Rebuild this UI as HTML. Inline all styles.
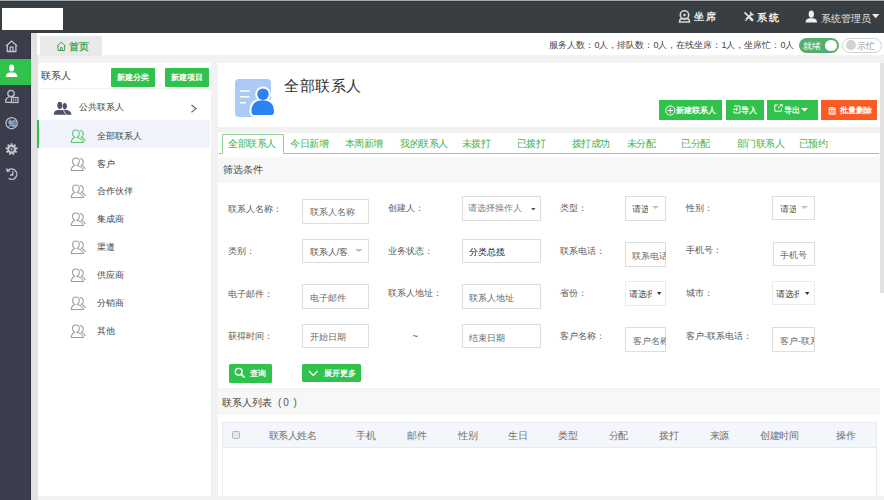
<!DOCTYPE html>
<html><head><meta charset="utf-8">
<style>
*{box-sizing:border-box;margin:0;padding:0}
html,body{width:884px;height:500px;overflow:hidden;background:#e9e9e9;font-family:"Liberation Sans",sans-serif;color:#333;position:relative}
.a{position:absolute;display:block}
.t{position:absolute;white-space:nowrap;line-height:1}
</style></head><body>
<div class="a" style="left:0px;top:0px;width:884px;height:500px;background:#f2f2f2"></div>
<div class="a" style="left:0px;top:0px;width:884px;height:32.7px;background:#393e42"></div>
<div class="a" style="left:0px;top:0px;width:884px;height:1px;background:#a8acaf"></div>
<div class="a" style="left:0px;top:1px;width:884px;height:1px;background:#30353a"></div>
<div class="a" style="left:2px;top:7.5px;width:61px;height:22.5px;background:#fff"></div>
<div class="a" style="left:31px;top:32.7px;width:6.6px;height:467.3px;background:#e2e2e2"></div>
<div class="a" style="left:0px;top:32.7px;width:31px;height:467.3px;background:#3b3d4c"></div>
<div class="a" style="left:30px;top:32.7px;width:1px;height:467.3px;background:#30323f"></div>
<div class="a" style="left:0px;top:58.6px;width:31px;height:26.2px;background:#31c24b"></div>
<svg class="a" style="left:678px;top:9px;" width="14" height="14" viewBox="0 0 14 14"><circle cx="6.5" cy="6" r="4.2" fill="none" stroke="#d6d6d6" stroke-width="1.6"/><circle cx="6.5" cy="6" r="1.3" fill="#d6d6d6"/><path d="M1.5 13 Q1.5 9.5 4.5 9.5 L8.5 9.5 Q11.5 9.5 11.5 13 Z" fill="none" stroke="#d6d6d6" stroke-width="1.5"/></svg>
<div class="t" style="left:693.8px;top:12.2px;font-size:10px;color:#eeeeee;font-weight:bold">坐</div>
<div class="t" style="left:706px;top:12.2px;font-size:10px;color:#eeeeee;font-weight:bold">席</div>
<svg class="a" style="left:742.5px;top:11px;" width="12" height="11" viewBox="0 0 12 11"><g stroke="#e0e0e0" stroke-linecap="round" fill="none"><path d="M2 1.8 L5 4.8" stroke-width="1.7"/><path d="M6.3 6.1 L9.2 9" stroke-width="2.6"/><path d="M8.6 3 L2.6 9" stroke-width="1.9"/><path d="M7.6 1.2 L8.4 3.2 L10.2 3.8" stroke-width="1.4"/></g><circle cx="2.3" cy="8.8" r="0.7" fill="#393e42"/></svg>
<div class="t" style="left:757px;top:12.8px;font-size:10px;color:#eeeeee;font-weight:bold">系</div>
<div class="t" style="left:768.8px;top:12.8px;font-size:10px;color:#eeeeee;font-weight:bold">统</div>
<svg class="a" style="left:805px;top:9.5px;" width="13" height="13" viewBox="0 0 13 13"><ellipse cx="6.3" cy="4.2" rx="2.6" ry="3.6" fill="#f0f0f0"/><path d="M0.5 12.6 Q0.8 8.6 4.2 8.2 L8.4 8.2 Q11.8 8.6 12.1 12.6 Z" fill="#f0f0f0"/></svg>
<div class="t" style="left:820.9px;top:13.5px;font-size:10px;color:#e6e6e6;">系统管理员</div>
<svg class="a" style="left:871.5px;top:14px;" width="8" height="5" viewBox="0 0 8 5"><path d="M0 0 L7.4 0 L3.7 4.3 Z" fill="#eee"/></svg>
<svg class="a" style="left:5px;top:40px;" width="14" height="13" viewBox="0 0 14 13"><path d="M1 6 L6.6 1 L12.2 6" fill="none" stroke="#c4c5cb" stroke-width="1.3"/><path d="M2.3 5.2 L2.3 11.5 L10.9 11.5 L10.9 5.2" fill="none" stroke="#c4c5cb" stroke-width="1.3"/><path d="M5.2 11.5 L5.2 7.2 L8 7.2 L8 11.5" fill="none" stroke="#c4c5cb" stroke-width="1.2"/></svg>
<svg class="a" style="left:5px;top:64px;" width="14" height="14" viewBox="0 0 14 14"><ellipse cx="6.6" cy="4" rx="2.6" ry="3.5" fill="#fff"/><path d="M0.8 13 Q0.9 9.3 4.2 8.6 L9 8.6 Q12.3 9.3 12.5 13 Z" fill="#fff"/></svg>
<svg class="a" style="left:4px;top:89px;" width="16" height="15" viewBox="0 0 16 15"><circle cx="7" cy="4.5" r="3.2" fill="none" stroke="#c4c5cb" stroke-width="1.3"/><path d="M5 8 Q1.5 9.5 1.5 12.2 Q1.5 13.4 3 13.4 L7 13.4" fill="none" stroke="#c4c5cb" stroke-width="1.3"/><rect x="7.5" y="8.5" width="6.5" height="5" fill="none" stroke="#c4c5cb" stroke-width="1.2"/><path d="M9.6 9.6 V12.4 M11.8 9.6 V12.4" stroke="#c4c5cb" stroke-width="0.9"/></svg>
<svg class="a" style="left:5px;top:116px;" width="14" height="14" viewBox="0 0 14 14"><circle cx="6.6" cy="7.2" r="5.6" fill="none" stroke="#c4c5cb" stroke-width="1.2"/></svg>
<div class="t" style="left:7.6px;top:120.2px;font-size:8px;color:#c4c5cb;font-weight:bold">知</div>
<svg class="a" style="left:5px;top:142px;" width="14" height="14" viewBox="0 0 14 14"><path d="M5.55 2.93 L5.74 1.26 L7.46 1.26 L7.65 2.93 L8.55 3.25 L9.76 2.10 L11.08 3.20 L10.15 4.60 L10.63 5.43 L12.30 5.32 L12.60 7.02 L10.99 7.49 L10.82 8.43 L12.17 9.42 L11.31 10.91 L9.78 10.24 L9.04 10.86 L9.44 12.49 L7.82 13.07 L7.08 11.57 L6.12 11.57 L5.38 13.07 L3.76 12.49 L4.16 10.86 L3.42 10.24 L1.89 10.91 L1.03 9.42 L2.38 8.43 L2.21 7.49 L0.60 7.02 L0.90 5.32 L2.57 5.43 L3.05 4.60 L2.12 3.20 L3.44 2.10 L4.65 3.25 Z" fill="#c4c5cb"/><circle cx="6.6" cy="7.2" r="2.3" fill="#3b3d4c"/><circle cx="6.6" cy="7.2" r="1" fill="#c4c5cb"/></svg>
<svg class="a" style="left:4px;top:166px;" width="16" height="16" viewBox="0 0 16 16"><path d="M4.2 4.2 A5.2 5.2 0 1 1 4.6 12.4" fill="none" stroke="#c4c5cb" stroke-width="1.3"/><path d="M2.2 1.8 L2.6 6 L6.6 5.6 Z" fill="#c4c5cb"/><path d="M8.8 5.2 V9 H6" fill="none" stroke="#c4c5cb" stroke-width="1.3"/></svg>
<div class="a" style="left:37px;top:33px;width:847px;height:22px;background:#fff"></div>
<div class="a" style="left:40px;top:36px;width:62px;height:20px;background:#e9e9e9"></div>
<svg class="a" style="left:56px;top:41px;" width="11" height="11" viewBox="0 0 11 11"><path d="M1 5 L5.3 1.2 L9.6 5 M2 4.4 V9.5 H8.6 V4.4 M4.4 9.5 V6.6 H6.2 V9.5" fill="none" stroke="#4a9d5b" stroke-width="1"/></svg>
<div class="t" style="left:69px;top:41.5px;font-size:10px;color:#45a85b;font-weight:bold">首页</div>
<div class="t" style="left:549.4px;top:40.9px;font-size:9px;color:#444;">服务人数：0人，排队数：0人，在线坐席：1人，坐席忙：0人</div>
<div class="a" style="left:799px;top:38px;width:40px;height:14.5px;border-radius:7.5px;background:#54ae6c"></div>
<div class="t" style="left:803px;top:41.7px;font-size:9px;color:#fff;">就绪</div>
<div class="a" style="left:825px;top:39.5px;width:11.5px;height:11.5px;border-radius:50%;background:#fff"></div>
<div class="a" style="left:842.4px;top:38px;width:39.5px;height:14.5px;border-radius:7.5px;background:#fff;border:1px solid #d2d2d2"></div>
<div class="a" style="left:846px;top:40.2px;width:10px;height:10px;border-radius:50%;background:#d2d2d2"></div>
<div class="t" style="left:857px;top:42.0px;font-size:9px;color:#999;">示忙</div>
<div class="a" style="left:37.6px;top:62.6px;width:173.6px;height:433.8px;background:#fff"></div>
<div class="t" style="left:40.8px;top:71.2px;font-size:10px;color:#3a3a3a;">联系人</div>
<div class="a" style="left:111px;top:67.5px;width:43.5px;height:19px;background:#31c24b;border-radius:1px"></div>
<div class="t" style="left:117px;top:74.0px;font-size:8px;color:#fff;font-weight:bold">新建分类</div>
<div class="a" style="left:164.5px;top:67.5px;width:44px;height:19px;background:#31c24b;border-radius:1px"></div>
<div class="t" style="left:170.5px;top:74.0px;font-size:8px;color:#fff;font-weight:bold">新建项目</div>
<div class="a" style="left:37px;top:88px;width:174px;height:1px;background:#f0f0f0"></div>
<svg class="a" style="left:53px;top:101px;" width="19" height="14" viewBox="0 0 19 14"><g fill="#505268"><ellipse cx="11.8" cy="5.2" rx="2.1" ry="3.1"/><path d="M9.8 9 L14 9 Q18.4 10 18.5 13.8 L11 13.8 Z"/><ellipse cx="6.8" cy="4.3" rx="2.5" ry="3.6"/><path d="M0.6 13.8 Q0.8 9.8 4.5 9 L9.2 9 Q12.8 9.8 13 13.8 Z"/></g><path d="M10.5 9.4 L13 13.8" stroke="#fff" stroke-width="0.8"/></svg>
<div class="t" style="left:78.6px;top:102.9px;font-size:9px;color:#444;">公共联系人</div>
<svg class="a" style="left:189.5px;top:104px;" width="8" height="10" viewBox="0 0 8 10"><path d="M1.5 1 L6 4.6 L1.5 8.2" fill="none" stroke="#666" stroke-width="1.2"/></svg>
<div class="a" style="left:39px;top:120.2px;width:170.5px;height:28px;background:#f0f3fb"></div>
<div class="a" style="left:37px;top:120.2px;width:2px;height:28px;background:#31c24b"></div>
<svg class="a" style="left:67.5px;top:127.70000000000002px;" width="19" height="16" viewBox="0 0 19 16"><g fill="none" stroke="#5cc46a" stroke-width="1.05"><path d="M6.6 9.4 C5.2 8.6 4.5 7 4.5 5.3 C4.5 3.3 6 2 7.9 2 C9.8 2 11.3 3.3 11.3 5.3 C11.3 7 10.6 8.6 9.2 9.4 C12.5 10.3 15 11.8 15.3 14.4 L3.3 14.4 C3.4 12 4.5 10.2 6.6 9.4 Z"/><path d="M11.8 2.6 C14 2.8 15.3 4.5 15.3 6.3 C15.3 7.6 14.6 8.6 13.5 9.2 C15.6 10 16.9 11.3 17.4 13.2"/></g></svg>
<div class="t" style="left:96.7px;top:131.8px;font-size:9px;color:#444;">全部联系人</div>
<svg class="a" style="left:67.5px;top:155.53px;" width="19" height="16" viewBox="0 0 19 16"><g fill="none" stroke="#9a9a9a" stroke-width="1.05"><path d="M6.6 9.4 C5.2 8.6 4.5 7 4.5 5.3 C4.5 3.3 6 2 7.9 2 C9.8 2 11.3 3.3 11.3 5.3 C11.3 7 10.6 8.6 9.2 9.4 C12.5 10.3 15 11.8 15.3 14.4 L3.3 14.4 C3.4 12 4.5 10.2 6.6 9.4 Z"/><path d="M11.8 2.6 C14 2.8 15.3 4.5 15.3 6.3 C15.3 7.6 14.6 8.6 13.5 9.2 C15.6 10 16.9 11.3 17.4 13.2"/></g></svg>
<div class="t" style="left:96.7px;top:159.63px;font-size:9px;color:#444;">客户</div>
<svg class="a" style="left:67.5px;top:183.36px;" width="19" height="16" viewBox="0 0 19 16"><g fill="none" stroke="#9a9a9a" stroke-width="1.05"><path d="M6.6 9.4 C5.2 8.6 4.5 7 4.5 5.3 C4.5 3.3 6 2 7.9 2 C9.8 2 11.3 3.3 11.3 5.3 C11.3 7 10.6 8.6 9.2 9.4 C12.5 10.3 15 11.8 15.3 14.4 L3.3 14.4 C3.4 12 4.5 10.2 6.6 9.4 Z"/><path d="M11.8 2.6 C14 2.8 15.3 4.5 15.3 6.3 C15.3 7.6 14.6 8.6 13.5 9.2 C15.6 10 16.9 11.3 17.4 13.2"/></g></svg>
<div class="t" style="left:96.7px;top:187.46px;font-size:9px;color:#444;">合作伙伴</div>
<svg class="a" style="left:67.5px;top:211.19000000000003px;" width="19" height="16" viewBox="0 0 19 16"><g fill="none" stroke="#9a9a9a" stroke-width="1.05"><path d="M6.6 9.4 C5.2 8.6 4.5 7 4.5 5.3 C4.5 3.3 6 2 7.9 2 C9.8 2 11.3 3.3 11.3 5.3 C11.3 7 10.6 8.6 9.2 9.4 C12.5 10.3 15 11.8 15.3 14.4 L3.3 14.4 C3.4 12 4.5 10.2 6.6 9.4 Z"/><path d="M11.8 2.6 C14 2.8 15.3 4.5 15.3 6.3 C15.3 7.6 14.6 8.6 13.5 9.2 C15.6 10 16.9 11.3 17.4 13.2"/></g></svg>
<div class="t" style="left:96.7px;top:215.29px;font-size:9px;color:#444;">集成商</div>
<svg class="a" style="left:67.5px;top:239.02px;" width="19" height="16" viewBox="0 0 19 16"><g fill="none" stroke="#9a9a9a" stroke-width="1.05"><path d="M6.6 9.4 C5.2 8.6 4.5 7 4.5 5.3 C4.5 3.3 6 2 7.9 2 C9.8 2 11.3 3.3 11.3 5.3 C11.3 7 10.6 8.6 9.2 9.4 C12.5 10.3 15 11.8 15.3 14.4 L3.3 14.4 C3.4 12 4.5 10.2 6.6 9.4 Z"/><path d="M11.8 2.6 C14 2.8 15.3 4.5 15.3 6.3 C15.3 7.6 14.6 8.6 13.5 9.2 C15.6 10 16.9 11.3 17.4 13.2"/></g></svg>
<div class="t" style="left:96.7px;top:243.12px;font-size:9px;color:#444;">渠道</div>
<svg class="a" style="left:67.5px;top:266.84999999999997px;" width="19" height="16" viewBox="0 0 19 16"><g fill="none" stroke="#9a9a9a" stroke-width="1.05"><path d="M6.6 9.4 C5.2 8.6 4.5 7 4.5 5.3 C4.5 3.3 6 2 7.9 2 C9.8 2 11.3 3.3 11.3 5.3 C11.3 7 10.6 8.6 9.2 9.4 C12.5 10.3 15 11.8 15.3 14.4 L3.3 14.4 C3.4 12 4.5 10.2 6.6 9.4 Z"/><path d="M11.8 2.6 C14 2.8 15.3 4.5 15.3 6.3 C15.3 7.6 14.6 8.6 13.5 9.2 C15.6 10 16.9 11.3 17.4 13.2"/></g></svg>
<div class="t" style="left:96.7px;top:270.95px;font-size:9px;color:#444;">供应商</div>
<svg class="a" style="left:67.5px;top:294.67999999999995px;" width="19" height="16" viewBox="0 0 19 16"><g fill="none" stroke="#9a9a9a" stroke-width="1.05"><path d="M6.6 9.4 C5.2 8.6 4.5 7 4.5 5.3 C4.5 3.3 6 2 7.9 2 C9.8 2 11.3 3.3 11.3 5.3 C11.3 7 10.6 8.6 9.2 9.4 C12.5 10.3 15 11.8 15.3 14.4 L3.3 14.4 C3.4 12 4.5 10.2 6.6 9.4 Z"/><path d="M11.8 2.6 C14 2.8 15.3 4.5 15.3 6.3 C15.3 7.6 14.6 8.6 13.5 9.2 C15.6 10 16.9 11.3 17.4 13.2"/></g></svg>
<div class="t" style="left:96.7px;top:298.78px;font-size:9px;color:#444;">分销商</div>
<svg class="a" style="left:67.5px;top:322.51px;" width="19" height="16" viewBox="0 0 19 16"><g fill="none" stroke="#9a9a9a" stroke-width="1.05"><path d="M6.6 9.4 C5.2 8.6 4.5 7 4.5 5.3 C4.5 3.3 6 2 7.9 2 C9.8 2 11.3 3.3 11.3 5.3 C11.3 7 10.6 8.6 9.2 9.4 C12.5 10.3 15 11.8 15.3 14.4 L3.3 14.4 C3.4 12 4.5 10.2 6.6 9.4 Z"/><path d="M11.8 2.6 C14 2.8 15.3 4.5 15.3 6.3 C15.3 7.6 14.6 8.6 13.5 9.2 C15.6 10 16.9 11.3 17.4 13.2"/></g></svg>
<div class="t" style="left:96.7px;top:326.61px;font-size:9px;color:#444;">其他</div>
<div class="a" style="left:218px;top:62.6px;width:662px;height:64px;background:#fff"></div>
<div class="a" style="left:880px;top:62.6px;width:4px;height:230px;background:#e2e2e2"></div>
<div class="a" style="left:880px;top:292.6px;width:4px;height:207.4px;background:#fff"></div>
<svg class="a" style="left:233px;top:77px;" width="46" height="44" viewBox="0 0 46 44"><rect x="2" y="2" width="36" height="38" rx="4" fill="#abcaf6"/><path d="M7 14 H16.8 M7 19.8 H16.8 M7 25.7 H13" stroke="#fff" stroke-width="1.5"/><g fill="#fff" stroke="#fff" stroke-width="4" stroke-linejoin="round"><circle cx="30" cy="17.2" r="5.8"/><path d="M18.5 33.5 Q18.8 23.5 29.75 23.3 Q40.7 23.5 41 33.5 L41 35 Q41 38 38 38 L21.5 38 Q18.5 38 18.5 35 Z"/></g><g fill="#2b82f3"><circle cx="30" cy="17.2" r="5.8"/><path d="M18.5 33.5 Q18.8 23.5 29.75 23.3 Q40.7 23.5 41 33.5 L41 35 Q41 38 38 38 L21.5 38 Q18.5 38 18.5 35 Z"/></g></svg>
<div class="t" style="left:284.2px;top:78.1px;font-size:15px;color:#2e2e2e;letter-spacing:0.5px">全部联系人</div>
<div class="a" style="left:659.2px;top:100.3px;width:63.3px;height:19.4px;background:#31c24b"></div>
<svg class="a" style="left:664.5px;top:104.7px;" width="11" height="11" viewBox="0 0 11 11"><circle cx="5.3" cy="5.5" r="4.6" fill="none" stroke="#fff" stroke-width="1"/><path d="M5.3 2.8 V8.2 M2.6 5.5 H8" stroke="#fff" stroke-width="1"/></svg>
<div class="t" style="left:676.4px;top:107.0px;font-size:8px;color:#fff;font-weight:bold">新建联系人</div>
<div class="a" style="left:726px;top:100.3px;width:37.6px;height:19.4px;background:#31c24b"></div>
<svg class="a" style="left:732.5px;top:104.5px;" width="8" height="9" viewBox="0 0 8 9"><path d="M1 1 H7 V8 H1 V6" fill="none" stroke="#fff" stroke-width="1"/><path d="M0 4.2 H4.6 M3 2.6 L4.7 4.2 L3 5.8" fill="none" stroke="#fff" stroke-width="1"/></svg>
<div class="t" style="left:741.2px;top:106.5px;font-size:8px;color:#fff;font-weight:bold">导入</div>
<div class="a" style="left:767.2px;top:100.3px;width:50.4px;height:19.4px;background:#31c24b"></div>
<svg class="a" style="left:774.4px;top:104.3px;" width="9" height="8" viewBox="0 0 9 8"><path d="M4 1 H0.8 V7.2 H7.4 V4" fill="none" stroke="#fff" stroke-width="1"/><path d="M4 4.2 L8 0.4 M5.6 0.4 H8.2 V3" fill="none" stroke="#fff" stroke-width="1"/></svg>
<div class="t" style="left:783.7px;top:106.5px;font-size:8px;color:#fff;font-weight:bold">导出</div>
<svg class="a" style="left:801px;top:108px;" width="8" height="4" viewBox="0 0 8 4"><path d="M0 0 H7 L3.5 3.6 Z" fill="#fff"/></svg>
<div class="a" style="left:820.9px;top:100.3px;width:55.8px;height:19.4px;background:#fb5a22"></div>
<svg class="a" style="left:828px;top:106.5px;" width="9" height="8" viewBox="0 0 9 8"><path d="M0.3 1 H7.9 M3 1 V0.2 H5.2 V1" fill="none" stroke="#fff" stroke-width="1"/><rect x="1.2" y="2.3" width="5.8" height="4.8" fill="none" stroke="#fff" stroke-width="1.1"/><path d="M3.2 3 V6.5 M5 3 V6.5" stroke="#fff" stroke-width="0.9"/></svg>
<div class="t" style="left:839.9px;top:107.0px;font-size:8px;color:#fff;font-weight:bold">批量删除</div>
<div class="a" style="left:218px;top:132.7px;width:662px;height:24.6px;background:#fff"></div>
<div class="a" style="left:218.6px;top:152.6px;width:660.4px;height:1px;background:#8fd199"></div>
<div class="a" style="left:222.2px;top:134px;width:61.5px;height:19.6px;background:#fff;border:1px solid #8fd199;border-bottom:none"></div>
<div class="t" style="left:228.4px;top:139.1px;font-size:10px;color:#3cb54c;letter-spacing:-0.5px">全部联系人</div>
<div class="t" style="left:290px;top:139.1px;font-size:10px;color:#3cb54c;letter-spacing:-0.5px">今日新增</div>
<div class="t" style="left:344.6px;top:139.1px;font-size:10px;color:#3cb54c;letter-spacing:-0.5px">本周新增</div>
<div class="t" style="left:400px;top:139.1px;font-size:10px;color:#3cb54c;letter-spacing:-0.5px">我的联系人</div>
<div class="t" style="left:461.7px;top:139.1px;font-size:10px;color:#3cb54c;letter-spacing:-0.5px">未拨打</div>
<div class="t" style="left:516.7px;top:139.1px;font-size:10px;color:#3cb54c;letter-spacing:-0.5px">已拨打</div>
<div class="t" style="left:571.9px;top:139.1px;font-size:10px;color:#3cb54c;letter-spacing:-0.5px">拨打成功</div>
<div class="t" style="left:626.5px;top:139.1px;font-size:10px;color:#3cb54c;letter-spacing:-0.5px">未分配</div>
<div class="t" style="left:681.3px;top:139.1px;font-size:10px;color:#3cb54c;letter-spacing:-0.5px">已分配</div>
<div class="t" style="left:736.8px;top:139.1px;font-size:10px;color:#3cb54c;letter-spacing:-0.5px">部门联系人</div>
<div class="t" style="left:798.5px;top:139.1px;font-size:10px;color:#3cb54c;letter-spacing:-0.5px">已预约</div>
<div class="a" style="left:218px;top:157.3px;width:662px;height:26px;background:#f7f7f7"></div>
<div class="t" style="left:222.7px;top:165.3px;font-size:10px;color:#4a4a4a;">筛选条件</div>
<div class="a" style="left:218px;top:183.3px;width:662px;height:205.1px;background:#fff"></div>
<div class="t" style="left:227.7px;top:204.5px;font-size:9px;color:#5a5a5a;">联系人名称：</div>
<div class="a" style="left:302.3px;top:199.2px;width:66.5px;height:24.4px;background:#fff;border:1px solid #dedede"></div>
<div class="t" style="left:309.8px;top:208.1px;font-size:9px;color:#686868;">联系人名称</div>
<div class="t" style="left:388.2px;top:204.0px;font-size:9px;color:#5a5a5a;">创建人：</div>
<div class="a" style="left:462.1px;top:196.2px;width:79px;height:24.4px;background:#fff;border:1px solid #dedede"></div>
<div class="t" style="left:468.3px;top:204.3px;font-size:9px;color:#808080;">请选择操作人</div>
<svg class="a" style="left:531.2px;top:207.6px;" width="5" height="3" viewBox="0 0 5 3"><path d="M0 0 H4.6 L2.3 2.6 Z" fill="#555"/></svg>
<div class="t" style="left:560px;top:204.0px;font-size:9px;color:#5a5a5a;">类型：</div>
<div class="a" style="left:625.2px;top:196.2px;width:41.3px;height:24.4px;background:#fff;border:1px solid #dedede"></div>
<div class="t" style="left:632px;top:205.1px;font-size:9px;color:#555;width:16px;overflow:hidden">请选择</div>
<svg class="a" style="left:652.4px;top:205.8px;" width="8" height="4" viewBox="0 0 8 4"><path d="M0 0 H7.2 L3.6 3 Z" fill="#c2c2c2"/></svg>
<div class="t" style="left:686.3px;top:204.0px;font-size:9px;color:#5a5a5a;">性别：</div>
<div class="a" style="left:772px;top:196.1px;width:42.6px;height:24.4px;background:#fff;border:1px solid #dedede"></div>
<div class="t" style="left:780.2px;top:205.1px;font-size:9px;color:#555;width:15.8px;overflow:hidden">请选择</div>
<svg class="a" style="left:801.2px;top:205.8px;" width="8" height="4" viewBox="0 0 8 4"><path d="M0 0 H7.2 L3.6 3 Z" fill="#c2c2c2"/></svg>
<div class="t" style="left:227.7px;top:246.8px;font-size:9px;color:#5a5a5a;">类别：</div>
<div class="a" style="left:302.3px;top:238.5px;width:66.5px;height:24.4px;background:#fff;border:1px solid #dedede"></div>
<div class="t" style="left:309.8px;top:247.5px;font-size:9px;color:#555;width:39.7px;overflow:hidden">联系人/客户</div>
<svg class="a" style="left:354.6px;top:249.3px;" width="8" height="4" viewBox="0 0 8 4"><path d="M0 0 H7.8 L3.9 3 Z" fill="#c2c2c2"/></svg>
<div class="t" style="left:388.2px;top:247.1px;font-size:9px;color:#5a5a5a;">业务状态：</div>
<div class="a" style="left:462.1px;top:238.5px;width:79px;height:24.9px;background:#fff;border:1px solid #dedede"></div>
<div class="t" style="left:469px;top:248.0px;font-size:9px;color:#111;">分类总揽</div>
<div class="t" style="left:560px;top:246.8px;font-size:9px;color:#5a5a5a;">联系电话：</div>
<div class="a" style="left:625.2px;top:241.7px;width:41.3px;height:24.9px;background:#fff;border:1px solid #dedede"></div>
<div class="t" style="left:632px;top:251.7px;font-size:9px;color:#686868;width:34px;overflow:hidden">联系电话</div>
<div class="t" style="left:686.3px;top:246.4px;font-size:9px;color:#5a5a5a;">手机号：</div>
<div class="a" style="left:772.5px;top:242.3px;width:42px;height:23.5px;background:#fff;border:1px solid #dedede"></div>
<div class="t" style="left:780px;top:251.3px;font-size:9px;color:#686868;width:34px;overflow:hidden">手机号</div>
<div class="t" style="left:228.4px;top:289.5px;font-size:9px;color:#5a5a5a;">电子邮件：</div>
<div class="a" style="left:302.3px;top:284.2px;width:66.5px;height:24.4px;background:#fff;border:1px solid #dedede"></div>
<div class="t" style="left:309.8px;top:293.9px;font-size:9px;color:#686868;">电子邮件</div>
<div class="t" style="left:388.2px;top:289.0px;font-size:9px;color:#5a5a5a;">联系人地址：</div>
<div class="a" style="left:462.1px;top:284.2px;width:79px;height:24.4px;background:#fff;border:1px solid #dedede"></div>
<div class="t" style="left:469px;top:293.9px;font-size:9px;color:#686868;">联系人地址</div>
<div class="t" style="left:560px;top:289.0px;font-size:9px;color:#5a5a5a;">省份：</div>
<div class="a" style="left:625.2px;top:281.2px;width:41.3px;height:24.4px;background:#fff;border:1px solid #ececec"></div>
<div class="t" style="left:629px;top:289.5px;font-size:9px;color:#444;width:22.5px;overflow:hidden">请选择</div>
<svg class="a" style="left:657px;top:292px;" width="5" height="4" viewBox="0 0 5 4"><path d="M0 0 H4.4 L2.2 3 Z" fill="#333"/></svg>
<div class="t" style="left:686.3px;top:289.0px;font-size:9px;color:#5a5a5a;">城市：</div>
<div class="a" style="left:772.4px;top:280.8px;width:42.2px;height:24.7px;background:#fff;border:1px solid #ececec"></div>
<div class="t" style="left:776.3px;top:289.5px;font-size:9px;color:#444;width:23.2px;overflow:hidden">请选择</div>
<svg class="a" style="left:805px;top:292px;" width="5" height="4" viewBox="0 0 5 4"><path d="M0 0 H4.4 L2.2 3 Z" fill="#333"/></svg>
<div class="t" style="left:228.4px;top:332.09999999999997px;font-size:9px;color:#5a5a5a;">获得时间：</div>
<div class="a" style="left:302.3px;top:324px;width:66.5px;height:24.4px;background:#fff;border:1px solid #dedede"></div>
<div class="t" style="left:309.8px;top:333.2px;font-size:9px;color:#686868;">开始日期</div>
<div class="t" style="left:412.2px;top:331.7px;font-size:10px;color:#666;">~</div>
<div class="a" style="left:462.1px;top:324px;width:79px;height:24.4px;background:#fff;border:1px solid #dedede"></div>
<div class="t" style="left:469px;top:333.5px;font-size:9px;color:#686868;">结束日期</div>
<div class="t" style="left:560px;top:332.09999999999997px;font-size:9px;color:#5a5a5a;">客户名称：</div>
<div class="a" style="left:625.2px;top:327.2px;width:41.3px;height:24.4px;background:#fff;border:1px solid #dedede"></div>
<div class="t" style="left:632.6px;top:336.5px;font-size:9px;color:#686868;width:33.4px;overflow:hidden">客户名称</div>
<div class="t" style="left:686.3px;top:331.9px;font-size:9px;color:#5a5a5a;">客户-联系电话：</div>
<div class="a" style="left:772.4px;top:327px;width:42.2px;height:24.5px;background:#fff;border:1px solid #dedede"></div>
<div class="t" style="left:780.3px;top:336.5px;font-size:9px;color:#686868;width:33.7px;overflow:hidden">客户-联系电话</div>
<div class="a" style="left:228.5px;top:363.7px;width:43.3px;height:18.9px;background:#31c24b;border-radius:1.5px"></div>
<svg class="a" style="left:234px;top:367px;" width="12" height="12" viewBox="0 0 12 12"><circle cx="4.7" cy="4.8" r="3.4" fill="none" stroke="#fff" stroke-width="1.4"/><path d="M7.2 7.3 L10 10" stroke="#fff" stroke-width="1.7" stroke-linecap="round"/></svg>
<div class="t" style="left:250.3px;top:369.7px;font-size:8px;color:#fff;font-weight:bold">查询</div>
<div class="a" style="left:302.3px;top:363.7px;width:58.4px;height:18.7px;background:#31c24b;border-radius:1.5px"></div>
<svg class="a" style="left:308px;top:369.5px;" width="11" height="7" viewBox="0 0 11 7"><path d="M1 1 L5.3 5.4 L9.6 1" fill="none" stroke="#fff" stroke-width="1.3"/></svg>
<div class="t" style="left:323.7px;top:370.4px;font-size:8px;color:#fff;font-weight:bold">展开更多</div>
<div class="a" style="left:218px;top:388.6px;width:662px;height:26.4px;background:#f7f7f7"></div>
<div class="t" style="left:222.2px;top:398.4px;font-size:10px;color:#444;">联系人列表</div>
<div class="t" style="left:278px;top:398.4px;font-size:10px;color:#555;">(</div>
<div class="t" style="left:283.3px;top:398.4px;font-size:10px;color:#555;">0</div>
<div class="t" style="left:293.6px;top:398.4px;font-size:10px;color:#555;">)</div>
<div class="a" style="left:218px;top:415px;width:662px;height:81.4px;background:#fff"></div>
<div class="a" style="left:222px;top:422.3px;width:655px;height:78px;border:1px solid #ebebeb;background:#fff"></div>
<div class="a" style="left:223px;top:423.3px;width:653px;height:24.4px;background:#f3f6fb;border-bottom:1px solid #eaeaea"></div>
<div class="a" style="left:231.9px;top:431px;width:8.2px;height:8.2px;border:1px solid #b5b5b5;border-radius:1.5px;background:#e6e6e6"></div>
<div class="t" style="left:268.7px;top:431.0px;font-size:10px;color:#707070;letter-spacing:-0.5px">联系人姓名</div>
<div class="t" style="left:356.3px;top:431.0px;font-size:10px;color:#707070;letter-spacing:-0.5px">手机</div>
<div class="t" style="left:407.4px;top:431.0px;font-size:10px;color:#707070;letter-spacing:-0.5px">邮件</div>
<div class="t" style="left:458px;top:431.0px;font-size:10px;color:#707070;letter-spacing:-0.5px">性别</div>
<div class="t" style="left:508.2px;top:431.0px;font-size:10px;color:#707070;letter-spacing:-0.5px">生日</div>
<div class="t" style="left:558.2px;top:431.0px;font-size:10px;color:#707070;letter-spacing:-0.5px">类型</div>
<div class="t" style="left:608.8px;top:431.0px;font-size:10px;color:#707070;letter-spacing:-0.5px">分配</div>
<div class="t" style="left:659.3px;top:431.0px;font-size:10px;color:#707070;letter-spacing:-0.5px">拨打</div>
<div class="t" style="left:709.6px;top:431.0px;font-size:10px;color:#707070;letter-spacing:-0.5px">来源</div>
<div class="t" style="left:760.1px;top:431.0px;font-size:10px;color:#707070;letter-spacing:-0.5px">创建时间</div>
<div class="t" style="left:836px;top:431.0px;font-size:10px;color:#707070;letter-spacing:-0.5px">操作</div>
<div class="a" style="left:37.6px;top:496.4px;width:846.4px;height:3.6px;background:#f1f1f1"></div>
</body></html>
